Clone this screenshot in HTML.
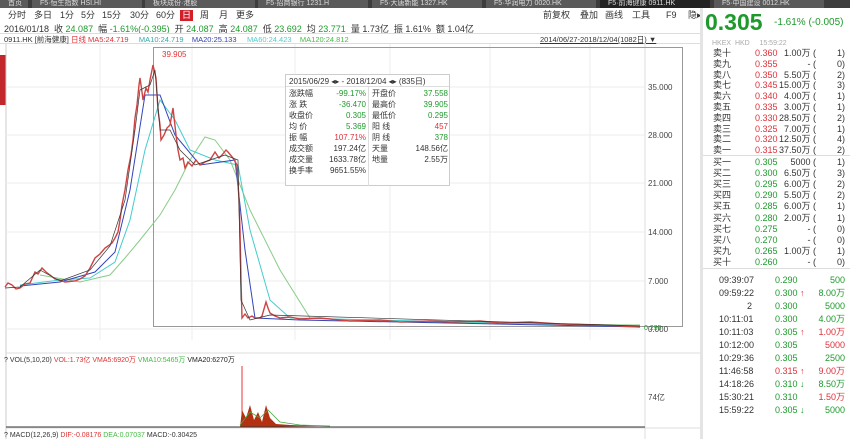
<!DOCTYPE html>
<html><head><meta charset="utf-8"><style>
*{margin:0;padding:0;box-sizing:border-box}
body{width:850px;height:439px;overflow:hidden;background:#fff;font-family:"Liberation Sans","Noto Sans CJK SC",sans-serif;font-size:9px;color:#333;position:relative}
.a{position:absolute;white-space:nowrap}
.tabs{position:absolute;left:0;top:0;width:850px;height:8px;background:#3d3d3d}
.tab{position:absolute;top:0;height:8px;background:#5a5a5a;color:#ddd;font-size:7px;line-height:7px;padding-left:8px}
.r{color:#e0303a}.g{color:#1e9a2c}.b{color:#2f3fb0}
.ob div{position:absolute;left:0;width:147px;height:10px;font-size:9px;line-height:10px}
.ob span{position:absolute}
</style></head><body>
<div class="tabs">
<div class="tab" style="left:0;width:28px">首页</div>
<div class="tab" style="left:32px;width:110px">F5·恒生指数 HSI.HI</div>
<div class="tab" style="left:145px;width:110px">板块成份·港股</div>
<div class="tab" style="left:258px;width:110px">F5·招商银行 1231.H</div>
<div class="tab" style="left:372px;width:110px">F5·大唐新能 1327.HK</div>
<div class="tab" style="left:486px;width:110px">F5·华润电力 0020.HK</div>
<div class="tab" style="left:600px;width:110px;background:#222">F5·前海健康 0911.HK</div>
<div class="tab" style="left:714px;width:110px">F5·中国建设 0012.HK</div>
</div>
<div class="a" style="left:0;top:9px;width:700px;height:12px;font-size:9px;line-height:12px">
<span class="a" style="left:8px">分时</span><span class="a" style="left:34px">多日</span><span class="a" style="left:60px">1分</span><span class="a" style="left:81px">5分</span><span class="a" style="left:102px">15分</span><span class="a" style="left:130px">30分</span><span class="a" style="left:156px">60分</span>
<span class="a" style="left:180px;top:1px;width:13px;height:11px;background:#d2202a;color:#fff;text-align:center;line-height:11px">日</span>
<span class="a" style="left:200px">周</span><span class="a" style="left:219px">月</span><span class="a" style="left:236px">更多</span>
<span class="a" style="left:543px">前复权</span><span class="a" style="left:580px">叠加</span><span class="a" style="left:605px">画线</span><span class="a" style="left:632px">工具</span><span class="a" style="left:666px">F9</span><span class="a" style="left:688px">隐▸</span>
</div>
<div class="a" style="left:4px;top:22px;font-size:9px">2016/01/18 &nbsp;收 <span class="g">24.087</span> &nbsp;幅 <span class="g">-1.61%(-0.395)</span> &nbsp;开 <span class="g">24.087</span> &nbsp;高 <span class="g">24.087</span> &nbsp;低 <span class="g">23.692</span> &nbsp;均 <span class="g">23.771</span> &nbsp;量 1.73亿 &nbsp;振 1.61% &nbsp;额 1.04亿</div>
<div class="a" style="left:0;top:33px;width:700px;height:11px;border-top:1px solid #ddd;border-bottom:1px solid #ddd"></div>
<div class="a" style="left:4px;top:34px;font-size:7.5px">0911.HK [前海健康] <span class="r">日线 MA5:24.719</span> &nbsp;&nbsp;&nbsp;&nbsp;<span style="color:#3aa">MA10:24.719</span> &nbsp;&nbsp;&nbsp;<span class="b">MA20:25.133</span> &nbsp;&nbsp;&nbsp;&nbsp;<span style="color:#5cc">MA60:24.423</span> &nbsp;&nbsp;&nbsp;<span style="color:#4b4">MA120:24.812</span></div>
<div class="a" style="left:540px;top:34px;font-size:7.5px;text-decoration:underline">2014/06/27-2018/12/04(1082日) ▼</div>
<svg class="a" style="left:0;top:44px" width="700" height="395" viewBox="0 44 700 395">
<rect x="0" y="55" width="6" height="50" fill="#c2272d"/>
<line x1="6" y1="44" x2="6" y2="439" stroke="#ccc"/>
<g stroke="#eee">
<line x1="6" y1="87" x2="645" y2="87"/><line x1="6" y1="135" x2="645" y2="135"/><line x1="6" y1="183" x2="645" y2="183"/><line x1="6" y1="232" x2="645" y2="232"/><line x1="6" y1="281" x2="645" y2="281"/><line x1="6" y1="329" x2="645" y2="329"/>
<line x1="100" y1="44" x2="100" y2="340"/><line x1="192" y1="44" x2="192" y2="340"/><line x1="295" y1="44" x2="295" y2="340"/><line x1="390" y1="44" x2="390" y2="340"/><line x1="490" y1="44" x2="490" y2="340"/><line x1="590" y1="44" x2="590" y2="340"/>
</g>
<line x1="645" y1="44" x2="645" y2="439" stroke="#ddd"/>
<rect x="153.5" y="47.5" width="529" height="279" fill="none" stroke="#999"/>
<g font-size="8" fill="#444" font-family="Liberation Sans">
<text x="648" y="90">35.000</text><text x="648" y="138">28.000</text><text x="648" y="186">21.000</text><text x="648" y="235">14.000</text><text x="648" y="284">7.000</text><text x="648" y="332">0.000</text>
<text x="648" y="400">74亿</text>
</g>
<text x="162" y="57" font-size="8" fill="#d33">39.905</text>
<text x="644" y="330" font-size="7" fill="#1a9a2a">0.295</text>
<polyline fill="none" stroke="#8c8" stroke-width="1" points="40,275 80,282 110,275 125,258 140,240 160,215 175,190 190,160 205,137 215,140 230,160 250,210 280,270 310,318 400,322 640,325"/>
<polyline fill="none" stroke="#4cc" stroke-width="1" points="20,285 60,280 90,278 115,262 130,220 145,150 160,100 175,120 190,150 215,160 238,165 250,230 270,300 290,318 640,326"/>
<polyline fill="none" stroke="#34b" stroke-width="1" points="20,286 60,282 95,272 115,252 130,190 145,95 160,95 175,135 200,165 235,160 245,250 255,318 300,320 640,327"/>
<polyline fill="none" stroke="#c44" stroke-width="1.4" points="5,287 8,283 12,285 16,289 20,288 25,284 30,283 35,272 38,274 42,268 46,272 50,275 55,279 60,280 65,282 75,281 80,279 85,276 90,268 95,258 100,254 105,248 108,246 112,243 115,238 118,232 120,220 122,205 125,190 128,170 131,155 133,140 135,118 137,105 139,85 140,78 142,92 143,100 146,88 148,92 150,80 153,65 156,78 158,110 160,125 161,140 164,135 167,128 170,125 173,108 176,135 178,150 180,160 183,158 185,168 188,162 192,166 196,160 200,165 205,162 210,160 215,152 219,158 222,155 226,150 228,152 233,158 237,165 239,200 240,230 241,280 242,318 245,314 248,318 252,316 255,318 260,318 262,316 266,302 268,308 270,313 275,316 280,318 290,317 300,319 320,318 350,321 380,320 400,322 430,321 450,322 480,321 500,323 530,322 560,324 600,325 640,327"/>
<polyline fill="none" stroke="#333" stroke-width="0.7" points="5,288 20,287 40,270 60,281 90,270 110,246 125,200 135,130 140,90 150,85 155,70 160,130 170,130 180,150 195,165 225,155 238,160 241,300 250,320 270,315 640,326"/>
<line x1="6" y1="353" x2="700" y2="353" stroke="#ddd"/>
<text x="4" y="362" font-size="7" fill="#333">? VOL(5,10,20) <tspan fill="#d33">VOL:1.73亿</tspan> <tspan fill="#d33">VMA5:6920万</tspan> <tspan fill="#4b4">VMA10:5465万</tspan> <tspan fill="#222">VMA20:6270万</tspan></text>
<line x1="242" y1="366" x2="242" y2="427" stroke="#e33"/>
<path d="M240 427 L242 410 L246 418 L250 405 L254 420 L258 412 L262 422 L266 405 L270 418 L276 424 L290 425 L320 426 L240 427Z" fill="#b33010"/>
<polyline points="240,425 250,412 260,418 268,410 280,422 300,425 330,426" fill="none" stroke="#4a4" stroke-width="0.8"/>
<line x1="6" y1="427" x2="645" y2="427" stroke="#333"/>
<line x1="6" y1="428" x2="700" y2="428" stroke="#ddd"/>
<text x="4" y="437" font-size="7" fill="#333">? MACD(12,26,9) <tspan fill="#d33">DIF:-0.08176</tspan> <tspan fill="#4b4">DEA:0.07037</tspan> MACD:-0.30425</text>
</svg>
<div class="a" style="left:285px;top:74px;width:165px;height:112px;background:#fff;border:1px solid #ccc;font-size:8px">
<div class="a" style="left:3px;top:1px">2015/06/29 ◂▸ - 2018/12/04 ◂▸ (835日)</div>
<div class="a" style="left:0;top:11px;width:163px;border-top:1px solid #ddd"></div>
<div class="a" style="left:82px;top:11px;height:100px;border-left:1px solid #ddd"></div>
<div class="a" style="left:3px;top:13px;line-height:11px">涨跌幅<br>涨 跌<br>收盘价<br>均 价<br>振 幅<br>成交额<br>成交量<br>换手率</div>
<div class="a" style="left:40px;top:13px;width:40px;text-align:right;line-height:11px"><span class="g">-99.17%</span><br><span class="g">-36.470</span><br><span class="g">0.305</span><br><span class="g">5.369</span><br><span class="r">107.71%</span><br>197.24亿<br>1633.78亿<br>9651.55%</div>
<div class="a" style="left:86px;top:13px;line-height:11px">开盘价<br>最高价<br>最低价<br>阳 线<br>阴 线<br>天量<br>地量</div>
<div class="a" style="left:122px;top:13px;width:40px;text-align:right;line-height:11px"><span class="g">37.558</span><br><span class="g">39.905</span><br><span class="g">0.295</span><br><span class="r">457</span><br><span class="g">378</span><br>148.56亿<br>2.55万</div>
</div>
<div class="a" style="left:700px;top:8px;width:150px;height:431px;border-left:3px solid #e4e4e4"></div>
<div class="a g" style="left:705px;top:9px;font-size:23px;font-weight:bold">0.305</div>
<div class="a g" style="left:774px;top:17px;font-size:10px">-1.61% (-0.005)</div>
<div class="a" style="left:712px;top:40px;font-size:7px;color:#aaa">HKEX &nbsp;HKD &nbsp;&nbsp;&nbsp;&nbsp;15:59:22</div>
<div class="a ob" style="left:703px;top:48px">
<div style="top:0"><span style="left:10px">卖十</span><span class="r" style="left:52px">0.360</span><span style="right:34px">1.00万 (</span><span style="right:5px">1)</span></div>
<div style="top:10.8px"><span style="left:10px">卖九</span><span class="r" style="left:52px">0.355</span><span style="right:34px">- (</span><span style="right:5px">0)</span></div>
<div style="top:21.6px"><span style="left:10px">卖八</span><span class="r" style="left:52px">0.350</span><span style="right:34px">5.50万 (</span><span style="right:5px">2)</span></div>
<div style="top:32.4px"><span style="left:10px">卖七</span><span class="r" style="left:52px">0.345</span><span style="right:34px">15.00万 (</span><span style="right:5px">3)</span></div>
<div style="top:43.2px"><span style="left:10px">卖六</span><span class="r" style="left:52px">0.340</span><span style="right:34px">4.00万 (</span><span style="right:5px">1)</span></div>
<div style="top:54px"><span style="left:10px">卖五</span><span class="r" style="left:52px">0.335</span><span style="right:34px">3.00万 (</span><span style="right:5px">1)</span></div>
<div style="top:64.8px"><span style="left:10px">卖四</span><span class="r" style="left:52px">0.330</span><span style="right:34px">28.50万 (</span><span style="right:5px">2)</span></div>
<div style="top:75.6px"><span style="left:10px">卖三</span><span class="r" style="left:52px">0.325</span><span style="right:34px">7.00万 (</span><span style="right:5px">1)</span></div>
<div style="top:86.4px"><span style="left:10px">卖二</span><span class="r" style="left:52px">0.320</span><span style="right:34px">12.50万 (</span><span style="right:5px">4)</span></div>
<div style="top:97.2px"><span style="left:10px">卖一</span><span class="r" style="left:52px">0.315</span><span style="right:34px">37.50万 (</span><span style="right:5px">2)</span></div>
<div style="top:107px;height:1px;border-top:1px solid #ddd"></div>
<div style="top:109px"><span style="left:10px">买一</span><span class="g" style="left:52px">0.305</span><span style="right:34px">5000 (</span><span style="right:5px">1)</span></div>
<div style="top:120.1px"><span style="left:10px">买二</span><span class="g" style="left:52px">0.300</span><span style="right:34px">6.50万 (</span><span style="right:5px">3)</span></div>
<div style="top:131.2px"><span style="left:10px">买三</span><span class="g" style="left:52px">0.295</span><span style="right:34px">6.00万 (</span><span style="right:5px">2)</span></div>
<div style="top:142.3px"><span style="left:10px">买四</span><span class="g" style="left:52px">0.290</span><span style="right:34px">5.50万 (</span><span style="right:5px">2)</span></div>
<div style="top:153.4px"><span style="left:10px">买五</span><span class="g" style="left:52px">0.285</span><span style="right:34px">6.00万 (</span><span style="right:5px">1)</span></div>
<div style="top:164.5px"><span style="left:10px">买六</span><span class="g" style="left:52px">0.280</span><span style="right:34px">2.00万 (</span><span style="right:5px">1)</span></div>
<div style="top:175.6px"><span style="left:10px">买七</span><span class="g" style="left:52px">0.275</span><span style="right:34px">- (</span><span style="right:5px">0)</span></div>
<div style="top:186.7px"><span style="left:10px">买八</span><span class="g" style="left:52px">0.270</span><span style="right:34px">- (</span><span style="right:5px">0)</span></div>
<div style="top:197.8px"><span style="left:10px">买九</span><span class="g" style="left:52px">0.265</span><span style="right:34px">1.00万 (</span><span style="right:5px">1)</span></div>
<div style="top:208.9px"><span style="left:10px">买十</span><span class="g" style="left:52px">0.260</span><span style="right:34px">- (</span><span style="right:5px">0)</span></div>
<div style="top:220px;height:1px;border-top:1px solid #ddd"></div>
<div style="top:227px"><span style="left:16px">09:39:07</span><span class="g" style="left:72px">0.290</span><span class="g" style="right:5px">500</span></div>
<div style="top:240px"><span style="left:16px">09:59:22</span><span class="g" style="left:72px">0.300 <b class="r">↑</b></span><span class="g" style="right:5px">8.00万</span></div>
<div style="top:253px"><span style="left:44px">2</span><span class="g" style="left:72px">0.300</span><span class="g" style="right:5px">5000</span></div>
<div style="top:266px"><span style="left:16px">10:11:01</span><span class="g" style="left:72px">0.300</span><span class="g" style="right:5px">4.00万</span></div>
<div style="top:279px"><span style="left:16px">10:11:03</span><span class="g" style="left:72px">0.305 <b class="r">↑</b></span><span class="r" style="right:5px">1.00万</span></div>
<div style="top:292px"><span style="left:16px">10:12:00</span><span class="g" style="left:72px">0.305</span><span class="r" style="right:5px">5000</span></div>
<div style="top:305px"><span style="left:16px">10:29:36</span><span class="g" style="left:72px">0.305</span><span class="g" style="right:5px">2500</span></div>
<div style="top:318px"><span style="left:16px">11:46:58</span><span class="r" style="left:72px">0.315 <b>↑</b></span><span class="r" style="right:5px">9.00万</span></div>
<div style="top:331px"><span style="left:16px">14:18:26</span><span class="g" style="left:72px">0.310 <b>↓</b></span><span class="g" style="right:5px">8.50万</span></div>
<div style="top:344px"><span style="left:16px">15:30:21</span><span class="g" style="left:72px">0.310</span><span class="r" style="right:5px">1.50万</span></div>
<div style="top:357px"><span style="left:16px">15:59:22</span><span class="g" style="left:72px">0.305 <b>↓</b></span><span class="g" style="right:5px">5000</span></div>
</div>
</body></html>
